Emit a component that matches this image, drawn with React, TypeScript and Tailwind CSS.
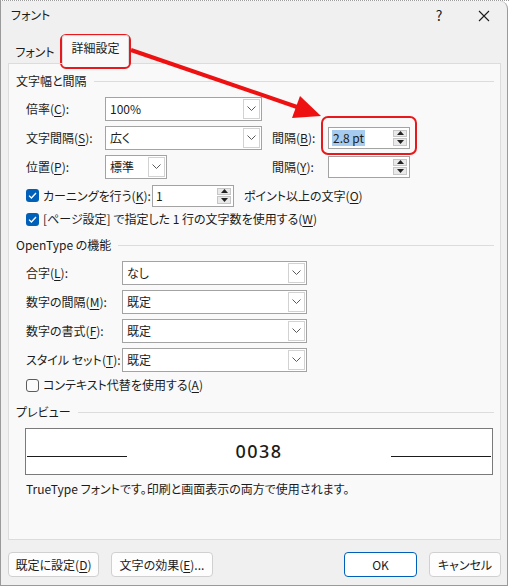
import type { ReactNode } from 'react';
import { clsx } from 'clsx';

// access-key letter, underlined like in Win32 dialogs
function K({ c }: { c: string }) {
  return <span className="underline underline-offset-[2px] decoration-1">{c}</span>;
}

function Chevron() {
  return (
    <svg width="9" height="5" viewBox="0 0 9 5">
      <polyline points="0.5,0.5 4.5,4.5 8.5,0.5" fill="none" stroke="#5a5a5a" strokeWidth="1" />
    </svg>
  );
}

function Combo({ value, className }: { value?: string; className: string }) {
  return (
    <div className={clsx('flex h-[24px] border border-[#a3a3a3] bg-white', className)}>
      <div className="flex flex-1 items-center px-[4px]">{value}</div>
      <div className="m-px flex w-[17px] items-center justify-center border border-[#d2d2d2] bg-white">
        <Chevron />
      </div>
    </div>
  );
}

function Spin({ children }: { children?: ReactNode }) {
  return (
    <div className="flex h-[22px] w-[82px] border border-[#a3a3a3] bg-white">
      <div className="flex flex-1 items-center px-[3px]">{children}</div>
      <div className="my-[2px] mr-[2px] flex w-[14px] flex-col gap-px">
        <div className="flex flex-1 items-center justify-center border border-[#c6c6c6] bg-[#e9e9e9]">
          <svg width="7" height="4" viewBox="0 0 7 4">
            <polygon points="3.5,0 7,4 0,4" fill="#222" />
          </svg>
        </div>
        <div className="flex flex-1 items-center justify-center border border-[#c6c6c6] bg-[#e9e9e9]">
          <svg width="7" height="4" viewBox="0 0 7 4">
            <polygon points="0,0 7,0 3.5,4" fill="#222" />
          </svg>
        </div>
      </div>
    </div>
  );
}

function Check({ on }: { on?: boolean }) {
  if (!on) {
    return <div className="h-[13px] w-[13px] rounded-[3px] border border-[#5c5c5c] bg-[#fbfbfb]" />;
  }
  return (
    <div className="flex h-[13px] w-[13px] items-center justify-center rounded-[3px] bg-[#005fb8]">
      <svg width="9" height="7" viewBox="0 0 9 7">
        <polyline points="1,3.6 3.4,6 8,1" fill="none" stroke="#fff" strokeWidth="1.3" />
      </svg>
    </div>
  );
}

function Section({ title }: { title: ReactNode }) {
  return (
    <div className="flex h-[16px] items-center gap-[7px]">
      <span className="whitespace-nowrap">{title}</span>
      <div className="h-px flex-1 bg-[#dcdcdc]" />
    </div>
  );
}

function Btn({ children, className }: { children: ReactNode; className: string }) {
  return (
    <button
      className={clsx(
        'flex h-[25px] items-center justify-center rounded-[4px] border bg-[#fdfdfd] text-[12px] text-[#1b1b1b] [font-feature-settings:"palt"]',
        className,
      )}
    >
      {children}
    </button>
  );
}

export default function App() {
  return (
    <div className="relative h-[586px] w-[509px] overflow-hidden border-t border-dotted border-[#9a9a9a] bg-white font-['Noto_Sans_CJK_JP','Noto_Sans',sans-serif] text-[12px] leading-none text-[#1b1b1b] [font-feature-settings:'palt']">
      <div className="flex h-[585px] w-[508px] flex-col rounded-tr-[8px] border border-t-0 border-[#9a9a9a] bg-[#f0f0f0]">
        {/* title bar */}
        <div className="flex h-[28px] items-center pl-[10px]">
          <span className="flex-1">フォント</span>
          <span className="w-[20px] text-center text-[14px]">?</span>
          <span className="ml-[25px] mr-[13px] w-[20px] text-center">
            <svg width="12" height="12" viewBox="0 0 12 12" className="inline">
              <path d="M1 1L11 11M11 1L1 11" stroke="#1b1b1b" strokeWidth="1.1" />
            </svg>
          </span>
        </div>

        {/* tabs */}
        <div className="relative z-10 -mb-px flex h-[35px] items-end pl-[7px]">
          <div className="flex h-[24px] w-[54px] items-center justify-center border-b border-[#dcdcdc]">フォント</div>
          <div className="flex h-[29px] w-[67px] items-center justify-center rounded-t-[3px] border border-b-0 border-[#dcdcdc] bg-[#f9f9f9] pb-[4px]">
            詳細設定
          </div>
        </div>

        {/* tab panel */}
        <div className="ml-[7px] flex h-[477px] w-[493px] flex-col border border-[#dcdcdc] bg-[#f9f9f9] pl-[7px] pr-[6px] pt-[9px]">
          <Section title="文字幅と間隔" />
          <div className="mt-[5px] pl-[10px]">
            <div className="flex h-[29px] items-center">
              <span className="w-[79px]">
                倍率(<K c="C" />):
              </span>
              <Combo value="100%" className="w-[157px]" />
            </div>
            <div className="flex h-[29px] items-center">
              <span className="w-[79px]">
                文字間隔(<K c="S" />):
              </span>
              <Combo value="広く" className="w-[157px]" />
              <span className="ml-[10px] w-[56px]">
                間隔(<K c="B" />):
              </span>
              <Spin>
                <span className="bg-[#a6cbee] px-px py-[2px]">2.8 pt</span>
              </Spin>
            </div>
            <div className="flex h-[29px] items-center">
              <span className="w-[79px]">
                位置(<K c="P" />):
              </span>
              <Combo value="標準" className="w-[62px]" />
              <span className="ml-[105px] w-[56px]">
                間隔(<K c="Y" />):
              </span>
              <Spin />
            </div>
            <div className="flex h-[29px] items-center">
              <Check on />
              <span className="ml-[4px] w-[109px] whitespace-nowrap">
                カーニングを行う(<K c="K" />):
              </span>
              <Spin>1</Spin>
              <span className="ml-[10px]">
                ポイント以上の文字(<K c="O" />)
              </span>
            </div>
            <div className="flex h-[18px] items-center">
              <Check on />
              <span className="ml-[4px] whitespace-nowrap">
                [ページ設定] で指定した 1 行の文字数を使用する(<K c="W" />)
              </span>
            </div>
          </div>

          <div className="mt-[9px]">
            <Section title="OpenType の機能" />
          </div>
          <div className="mt-[5px] pl-[10px]">
            {[
              ['合字', 'L', 'なし'],
              ['数字の間隔', 'M', '既定'],
              ['数字の書式', 'F', '既定'],
              ['スタイル セット', 'T', '既定'],
            ].map(([label, key, value]) => (
              <div key={key} className="flex h-[29px] items-center">
                <span className="w-[96px] whitespace-nowrap">
                  {label}(<K c={key} />):
                </span>
                <Combo value={value} className="w-[185px]" />
              </div>
            ))}
            <div className="flex h-[22px] items-center">
              <Check />
              <span className="ml-[4px]">
                コンテキスト代替を使用する(<K c="A" />)
              </span>
            </div>
          </div>

          <div className="mt-[8px]">
            <Section title="プレビュー" />
          </div>
          <div className="ml-[9px] mt-[8px] flex h-[47px] w-[468px] border border-[#7a7a7a] bg-white px-px">
            <div className="mt-[27px] h-px w-[100px] bg-[#1b1b1b]" />
            <div className="flex flex-1 items-center justify-center pb-[2px] font-['Noto_Sans',sans-serif] text-[18px] font-medium tracking-[1.5px]">
              0038
            </div>
            <div className="mt-[27px] h-px w-[100px] bg-[#1b1b1b]" />
          </div>
          <div className="ml-[10px] mt-[6px] flex h-[16px] items-center">
            TrueType フォントです。印刷と画面表示の両方で使用されます。
          </div>
        </div>

        {/* dialog buttons */}
        <div className="ml-[7px] mt-[12px] flex w-[493px]">
          <Btn className="w-[91px] border-[#d0d0d0]">
            既定に設定(<K c="D" />)
          </Btn>
          <Btn className="ml-[12px] w-[102px] border-[#d0d0d0]">
            文字の効果(<K c="E" />)...
          </Btn>
          <div className="flex-1" />
          <Btn className="w-[73px] border-[#005fb8] bg-white">OK</Btn>
          <Btn className="ml-[12px] w-[72px] border-[#d0d0d0]">キャンセル</Btn>
        </div>
      </div>

      {/* red annotation overlay */}
      <svg className="pointer-events-none absolute left-0 top-0" width="509" height="586" viewBox="0 0 509 586">
        <rect x="61" y="34" width="69" height="33" rx="5" fill="none" stroke="#e8191c" strokeWidth="2" />
        <rect x="322" y="116" width="94" height="37" rx="6" fill="none" stroke="#e8191c" strokeWidth="2" />
        <line x1="131" y1="49" x2="297" y2="106" stroke="#ee1111" strokeWidth="4" />
        <polygon points="321,115 292,117 300,95" fill="#ee1111" />
      </svg>
    </div>
  );
}
